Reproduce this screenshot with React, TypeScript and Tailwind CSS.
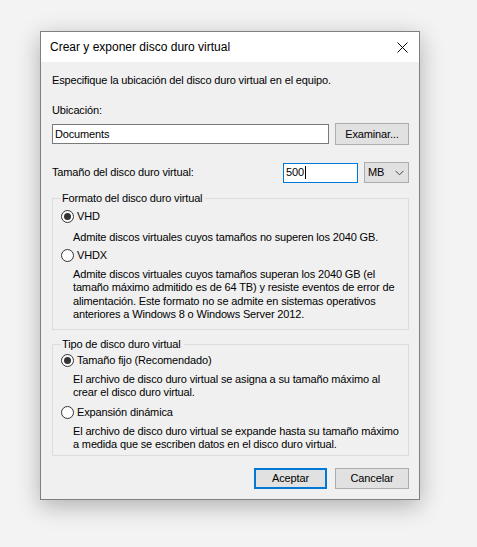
import React from "react";

function Radio({ checked, label }: { checked?: boolean; label: string }) {
  return (
    <div className="flex h-[16px] items-center">
      <span className="flex h-[13px] w-[13px] shrink-0 items-center justify-center rounded-full border border-[#333333] bg-white">
        {checked && <span className="h-[7px] w-[7px] rounded-full bg-[#333333]" />}
      </span>
      <span className="ml-[3px] whitespace-nowrap leading-[16px]">{label}</span>
    </div>
  );
}

export default function App() {
  return (
    <div
      className="h-[547px] w-[477px] overflow-hidden bg-[#f3f3f3] pl-[40px] pt-[31px] text-[11px] tracking-[-0.15px] text-black"
      style={{ fontFamily: '"Liberation Sans", Arial, sans-serif' }}
    >
      <div className="flex h-[469px] w-[380px] flex-col border border-[#7f7f7f] bg-[#f0f0f0] shadow-[0_6px_22px_rgba(0,0,0,0.28)]">
        {/* Title bar */}
        <div className="flex h-[30px] shrink-0 items-center justify-between bg-white pl-[9px] pr-[10px]">
          <span className="text-[12px] leading-[14px] tracking-normal">Crear y exponer disco duro virtual</span>
          <svg width="11" height="11" viewBox="0 0 11 11" className="mr-[1px]">
            <path d="M0.5 0.5 L10.5 10.5 M10.5 0.5 L0.5 10.5" stroke="#000" strokeWidth="1" fill="none" />
          </svg>
        </div>

        {/* Body */}
        <div className="flex flex-col whitespace-nowrap pl-[11px] pr-[10px]">
          <div className="mt-[11px] leading-[14px]">Especifique la ubicación del disco duro virtual en el equipo.</div>
          <div className="mt-[16px] leading-[14px]">Ubicación:</div>

          <div className="mt-[6px] flex h-[22px] items-center justify-between">
            <div className="flex h-[20px] w-[277px] items-center border border-[#7a7a7a] bg-white pl-[2px]">
              Documents
            </div>
            <div className="flex h-[22px] w-[74px] items-center justify-center border border-[#adadad] bg-[#e1e1e1]">
              Examinar...
            </div>
          </div>

          <div className="mt-[17px] flex h-[21px] items-center">
            <span className="flex-1">Tamaño del disco duro virtual:</span>
            <div className="flex h-[20px] w-[75px] items-center border border-[#0078d7] bg-white pl-[2px]">
              500<span className="ml-px inline-block h-[13px] w-px bg-black" />
            </div>
            <div className="ml-[6px] flex h-[21px] w-[45px] items-center justify-between border border-[#adadad] bg-[#e1e1e1] pl-[3px] pr-[4px]">
              <span>MB</span>
              <svg width="9" height="6" viewBox="0 0 9 6">
                <path d="M0.5 0.8 L4.5 4.8 L8.5 0.8" stroke="#444" strokeWidth="1" fill="none" />
              </svg>
            </div>
          </div>

          {/* Formato */}
          <fieldset className="mt-[8px] border border-[#dcdcdc] pb-[8px] pl-[8px] pr-[8px]">
            <legend className="pl-px pr-[3px] leading-[14px]">Formato del disco duro virtual</legend>
            <div className="mt-[3px]">
              <Radio checked label="VHD" />
            </div>
            <div className="ml-[12px] mt-[7px] leading-[13px]">
              Admite discos virtuales cuyos tamaños no superen los 2040 GB.
            </div>
            <div className="mt-[3px]">
              <Radio label="VHDX" />
            </div>
            <div className="ml-[12px] mt-[5px] leading-[13.3px]">
              Admite discos virtuales cuyos tamaños superan los 2040 GB (el
              <br />
              tamaño máximo admitido es de 64 TB) y resiste eventos de error de
              <br />
              alimentación. Este formato no se admite en sistemas operativos
              <br />
              anteriores a Windows 8 o Windows Server 2012.
            </div>
          </fieldset>

          {/* Tipo */}
          <fieldset className="mt-[7px] border border-[#dcdcdc] pb-[4px] pl-[8px] pr-[8px]">
            <legend className="pl-px pr-[3px] leading-[14px]">Tipo de disco duro virtual</legend>
            <div className="mt-[1px]">
              <Radio checked label="Tamaño fijo (Recomendado)" />
            </div>
            <div className="ml-[12px] mt-[5px] leading-[13px]">
              El archivo de disco duro virtual se asigna a su tamaño máximo al
              <br />
              crear el disco duro virtual.
            </div>
            <div className="mt-[5px]">
              <Radio label="Expansión dinámica" />
            </div>
            <div className="ml-[12px] mt-[5px] leading-[13px]">
              El archivo de disco duro virtual se expande hasta su tamaño máximo
              <br />
              a medida que se escriben datos en el disco duro virtual.
            </div>
          </fieldset>

          <div className="mt-[12px] flex justify-end">
            <div className="flex h-[21px] w-[73px] items-center justify-center border-2 border-[#0078d7] bg-[#e1e1e1]">
              Aceptar
            </div>
            <div className="ml-[8px] flex h-[21px] w-[74px] items-center justify-center border border-[#adadad] bg-[#e1e1e1]">
              Cancelar
            </div>
          </div>
        </div>
      </div>
    </div>
  );
}
